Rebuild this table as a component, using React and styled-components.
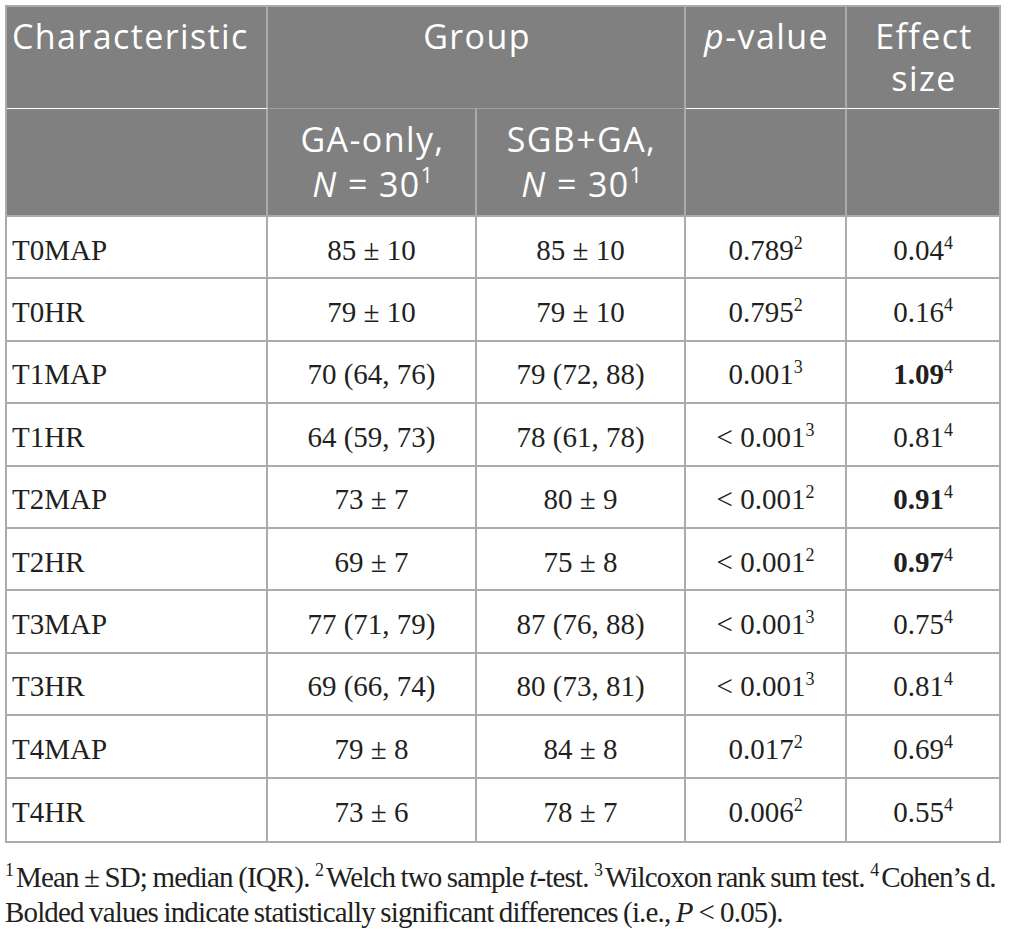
import React from "react";
import styled, { createGlobalStyle } from "styled-components";

const Global = createGlobalStyle`
  html, body { margin: 0; padding: 0; background: #ffffff; }
  body { font-family: "Liberation Serif", "Times New Roman", serif; color: #231f20; }
`;

const Page = styled.div`
  padding: 5px 8px 0 5px;
  width: 996px;
`;

const Table = styled.table`
  border-collapse: separate;
  border-spacing: 0;
  table-layout: fixed;
  width: 996px;
  border: 2px solid #ababab;
`;

const HeadRow = styled.tr`
  height: ${(p) => p.$h}px;
`;

const HeadCell = styled.th`
  background: #808080;
  color: #ffffff;
  font-family: "Open Sans", "Liberation Sans", sans-serif;
  font-weight: 400;
  font-size: 34px;
  letter-spacing: 1.4px;
  line-height: ${(p) => (p.$sub ? 45 : 42)}px;
  text-align: ${(p) => (p.$left ? "left" : "center")};
  vertical-align: top;
  padding: ${(p) => (p.$left ? "8px 8px 0 5px" : "8px 2px 0 4px")};
  border-right: ${(p) => (p.$last ? "none" : "2px solid #ababab")};
  border-bottom: ${(p) => p.$bottom || "2px solid #ababab"};
  box-sizing: border-box;
  white-space: nowrap;
  i { font-style: italic; }
  sup { font-size: 21px; line-height: 0; vertical-align: 14px; letter-spacing: 0; }
`;

const BodyRow = styled.tr`
  height: 62.4px;
`;

const Cell = styled.td`
  font-family: "Liberation Serif", "Times New Roman", serif;
  font-size: 29px;
  color: #231f20;
  text-align: ${(p) => (p.$left ? "left" : "center")};
  vertical-align: middle;
  padding: ${(p) => (p.$left ? "6px 6px 0 5px" : "6px 4px 0")};
  border-right: ${(p) => (p.$last ? "none" : "2px solid #ababab")};
  border-bottom: ${(p) => (p.$lastRow ? "none" : "2px solid #ababab")};
  box-sizing: border-box;
  white-space: nowrap;
  b { font-weight: 700; }
  sup { font-size: 18px; line-height: 0; vertical-align: 11px; }
`;

const Footnote = styled.div`
  margin-top: 17px;
  font-family: "Liberation Serif", "Times New Roman", serif;
  font-size: 29px;
  line-height: 35px;
  letter-spacing: -0.85px;
  word-spacing: -1px;
  color: #231f20;
  white-space: nowrap;
  i { font-style: italic; }
  sup { font-size: 18px; line-height: 0; vertical-align: 11px; margin-right: 2px; letter-spacing: 0; }
`;

const Rel = styled.span`
  margin: 0 6px;
`;

const rows = [
  ["T0MAP", "85 ± 10", "85 ± 10", "0.789", "2", "0.04", false],
  ["T0HR", "79 ± 10", "79 ± 10", "0.795", "2", "0.16", false],
  ["T1MAP", "70 (64, 76)", "79 (72, 88)", "0.001", "3", "1.09", true],
  ["T1HR", "64 (59, 73)", "78 (61, 78)", "< 0.001", "3", "0.81", false],
  ["T2MAP", "73 ± 7", "80 ± 9", "< 0.001", "2", "0.91", true],
  ["T2HR", "69 ± 7", "75 ± 8", "< 0.001", "2", "0.97", true],
  ["T3MAP", "77 (71, 79)", "87 (76, 88)", "< 0.001", "3", "0.75", false],
  ["T3HR", "69 (66, 74)", "80 (73, 81)", "< 0.001", "3", "0.81", false],
  ["T4MAP", "79 ± 8", "84 ± 8", "0.017", "2", "0.69", false],
  ["T4HR", "73 ± 6", "78 ± 7", "0.006", "2", "0.55", false],
];

export default function App() {
  return (
    <Page>
      <Global />
      <Table>
        <colgroup>
          <col style={{ width: 261 }} />
          <col style={{ width: 209 }} />
          <col style={{ width: 209 }} />
          <col style={{ width: 161 }} />
          <col style={{ width: 152 }} />
        </colgroup>
        <thead>
          <HeadRow $h={102}>
            <HeadCell $left $bottom="1px solid #ffffff">Characteristic</HeadCell>
            <HeadCell colSpan={2} $bottom="1px solid #a0a0a0">Group</HeadCell>
            <HeadCell $bottom="1px solid #ffffff"><i>p</i>-value</HeadCell>
            <HeadCell $last $bottom="1px solid #ffffff">Effect<br />size</HeadCell>
          </HeadRow>
          <HeadRow $h={108}>
            <HeadCell $left $sub />
            <HeadCell $sub>GA-only,<br /><i>N</i> = 30<sup>1</sup></HeadCell>
            <HeadCell $sub>SGB+GA,<br /><i>N</i> = 30<sup>1</sup></HeadCell>
            <HeadCell $sub />
            <HeadCell $sub $last />
          </HeadRow>
        </thead>
        <tbody>
          {rows.map((r, i) => {
            const lastRow = i === rows.length - 1;
            return (
              <BodyRow key={r[0]}>
                <Cell $left $lastRow={lastRow}>{r[0]}</Cell>
                <Cell $lastRow={lastRow}>{r[1]}</Cell>
                <Cell $lastRow={lastRow}>{r[2]}</Cell>
                <Cell $lastRow={lastRow}>{r[3]}<sup>{r[4]}</sup></Cell>
                <Cell $last $lastRow={lastRow}>
                  {r[6] ? <b>{r[5]}</b> : r[5]}<sup>4</sup>
                </Cell>
              </BodyRow>
            );
          })}
        </tbody>
      </Table>
      <Footnote>
        <sup>1</sup>Mean ± SD; median (IQR). <sup>2</sup>Welch two sample <i>t</i>-test. <sup>3</sup>Wilcoxon rank sum test. <sup>4</sup>Cohen’s d.
        <br />
        Bolded values indicate statistically significant differences (i.e., <i>P</i><Rel>&lt;</Rel>0.05).
      </Footnote>
    </Page>
  );
}
